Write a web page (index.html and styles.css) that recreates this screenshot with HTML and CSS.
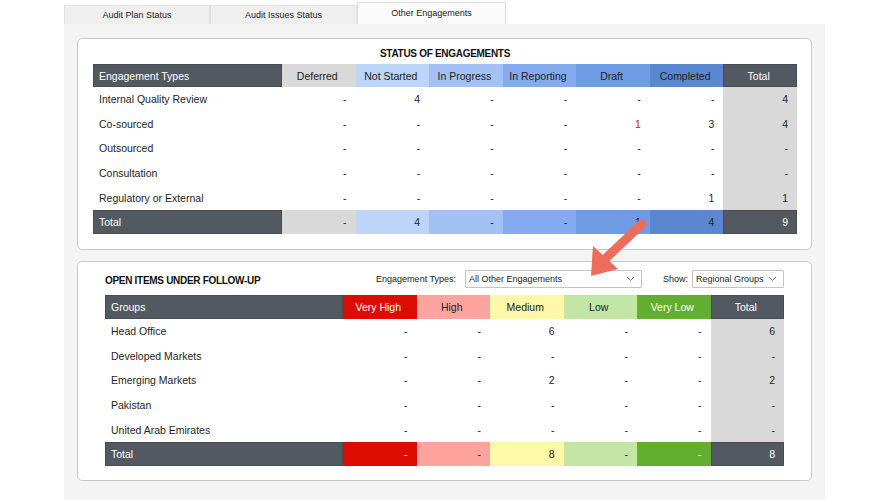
FILE: index.html
```html
<!DOCTYPE html>
<html>
<head>
<meta charset="utf-8">
<link rel="stylesheet" href="styles.css">
</head>
<body>
<div class="wrap">
  <div class="tabs">
    <div class="tab">Audit Plan Status</div>
    <div class="tab">Audit Issues Status</div>
    <div class="tab active">Other Engagements</div>
  </div>
  <div class="content">
    <div class="panel panel1">
      <div class="title center">STATUS OF ENGAGEMENTS</div>
      <table class="grid t1">
        <colgroup>
          <col class="c-name1"><col class="c-v"><col class="c-v"><col class="c-v"><col class="c-v"><col class="c-v"><col class="c-v"><col class="c-v">
        </colgroup>
        <tr class="head">
          <th class="dark left">Engagement Types</th>
          <th class="deferred">Deferred</th>
          <th class="ns">Not Started</th>
          <th class="ip">In Progress</th>
          <th class="ir">In Reporting</th>
          <th class="dr">Draft</th>
          <th class="co">Completed</th>
          <th class="dark">Total</th>
        </tr>
        <tr><td class="left">Internal Quality Review</td><td>-</td><td>4</td><td>-</td><td>-</td><td>-</td><td>-</td><td class="tot">4</td></tr>
        <tr><td class="left">Co-sourced</td><td>-</td><td>-</td><td>-</td><td>-</td><td class="red">1</td><td>3</td><td class="tot">4</td></tr>
        <tr><td class="left">Outsourced</td><td>-</td><td>-</td><td>-</td><td>-</td><td>-</td><td>-</td><td class="tot">-</td></tr>
        <tr><td class="left">Consultation</td><td>-</td><td>-</td><td>-</td><td>-</td><td>-</td><td>-</td><td class="tot">-</td></tr>
        <tr><td class="left">Regulatory or External</td><td>-</td><td>-</td><td>-</td><td>-</td><td>-</td><td>1</td><td class="tot">1</td></tr>
        <tr class="total">
          <td class="dark left">Total</td>
          <td class="deferred">-</td>
          <td class="ns">4</td>
          <td class="ip">-</td>
          <td class="ir">-</td>
          <td class="dr">1</td>
          <td class="co">4</td>
          <td class="dark">9</td>
        </tr>
      </table>
    </div>

    <div class="panel panel2">
      <div class="toolbar">
        <div class="title">OPEN ITEMS UNDER FOLLOW-UP</div>
        <span class="label">Engagement Types:</span>
        <div class="select sel1"><span>All Other Engagements</span>
          <svg class="chev" width="9" height="6" viewBox="0 0 9 6"><path d="M1 1 L4.5 4.5 L8 1" fill="none" stroke="#777" stroke-width="1"/></svg>
        </div>
        <span class="label show">Show:</span>
        <div class="select sel2"><span>Regional Groups</span>
          <svg class="chev" width="9" height="6" viewBox="0 0 9 6"><path d="M1 1 L4.5 4.5 L8 1" fill="none" stroke="#777" stroke-width="1"/></svg>
        </div>
      </div>
      <table class="grid t2">
        <colgroup>
          <col class="c-name2"><col class="c-v2"><col class="c-v2"><col class="c-v2"><col class="c-v2"><col class="c-v2"><col class="c-v2">
        </colgroup>
        <tr class="head">
          <th class="dark left">Groups</th>
          <th class="vh">Very High</th>
          <th class="hi">High</th>
          <th class="me">Medium</th>
          <th class="lo">Low</th>
          <th class="vl">Very Low</th>
          <th class="dark">Total</th>
        </tr>
        <tr><td class="left">Head Office</td><td>-</td><td>-</td><td>6</td><td>-</td><td>-</td><td class="tot">6</td></tr>
        <tr><td class="left">Developed Markets</td><td>-</td><td>-</td><td>-</td><td>-</td><td>-</td><td class="tot">-</td></tr>
        <tr><td class="left">Emerging Markets</td><td>-</td><td>-</td><td>2</td><td>-</td><td>-</td><td class="tot">2</td></tr>
        <tr><td class="left">Pakistan</td><td>-</td><td>-</td><td>-</td><td>-</td><td>-</td><td class="tot">-</td></tr>
        <tr><td class="left">United Arab Emirates</td><td>-</td><td>-</td><td>-</td><td>-</td><td>-</td><td class="tot">-</td></tr>
        <tr class="total">
          <td class="dark left">Total</td>
          <td class="vh">-</td>
          <td class="hi">-</td>
          <td class="me">8</td>
          <td class="lo">-</td>
          <td class="vl">-</td>
          <td class="dark">8</td>
        </tr>
      </table>
    </div>
  </div>
</div>

<svg class="arrow" width="70" height="66" viewBox="0 0 70 66">
  <line x1="62" y1="6" x2="26" y2="40" stroke="#ee6c5b" stroke-width="9" stroke-linecap="round"/>
  <polygon points="11,58 13,28 38,51" fill="#ee6c5b"/>
</svg>
</body>
</html>
```

FILE: styles.css
```css
* { box-sizing: border-box; }
html, body {
  margin: 0;
  padding: 0;
  background: #ffffff;
  font-family: "Liberation Sans", Arial, sans-serif;
  color: #1e1e1e;
}
.wrap {
  width: 761px;
  margin-left: 64px;
  padding-top: 2px;
}
.tabs {
  display: flex;
  align-items: flex-end;
  height: 22px;
}
.tab {
  height: 19px;
  width: 146px;
  background: #efefef;
  border: 1px solid #e2e2e2;
  border-bottom: none;
  font-size: 9px;
  line-height: 18px;
  text-align: center;
  color: #222;
}
.tab + .tab { border-left: 1px solid #dddddd; }
.tab:nth-child(2) { width: 147px; }
.tab.active {
  height: 22px;
  width: 149px;
  background: #fbfbfb;
  line-height: 21px;
  border: 1px solid #dcdcdc;
  border-bottom: none;
  border-radius: 2px 2px 0 0;
}
.content {
  background: #f4f4f4;
  padding: 14px 13px 20px 13px;
  height: 480px;
}
.panel {
  background: #ffffff;
  border: 1px solid #c8c8c8;
  border-radius: 5px;
}
.panel1 {
  padding: 0 14px 15px 15px;
}
.panel2 {
  margin-top: 11px;
  padding: 0 27px 14px 27px;
}
.title {
  font-weight: bold;
  font-size: 10px;
  letter-spacing: -0.3px;
  color: #111;
}
.title.center {
  text-align: center;
  height: 25px;
  padding-top: 9px;
  line-height: 12px;
}
.toolbar {
  display: flex;
  align-items: center;
  height: 33px;
  padding-top: 8px;
  padding-bottom: 7px;
}
.toolbar .title {
  flex: 1;
  padding-top: 4px;
}
.label {
  font-size: 9px;
  color: #222;
  margin-right: 9px;
}
.label.show {
  margin-left: 21px;
  margin-right: 4px;
}
.select {
  height: 18px;
  border: 1px solid #c4c4c4;
  background: #fff;
  font-size: 9px;
  display: flex;
  align-items: center;
  justify-content: space-between;
  padding: 0 6px 0 3px;
  border-radius: 1px;
}
.sel1 { width: 177px; }
.sel2 { width: 92px; }
.chev { display: block; }

.grid {
  border-collapse: collapse;
  table-layout: fixed;
  font-size: 10.5px;
}
.t1 { width: 704px; }
.t2 { width: 679px; }
.c-name1 { width: 189px; }
.c-name2 { width: 238px; }
.grid th, .grid td {
  padding: 0 9px 0 6px;
  white-space: nowrap;
  overflow: hidden;
}
.grid th {
  font-weight: normal;
  text-align: center;
  color: #222;
}
.grid td { text-align: right; }
.grid .left { text-align: left; }
.t1 .head { height: 23px; }
.t2 .head { height: 24px; }
.grid tr { height: 24.6px; }
.grid tr.total { height: 24px; }
.dark {
  background: #535960;
  color: #ffffff !important;
  box-shadow: inset 0 0 0 1px #474c52;
}
.tot { background: #d9d9d9; }
.red { color: #c4161c; }

.deferred { background: #d9d9d9; }
.ns { background: #bed5fa; }
.ip { background: #a3c1f4; }
.ir { background: #85abee; }
.dr { background: #6e9ce4; }
.co { background: #5a87d0; }

.vh { background: #dc0d00; color: #ffffff !important; }
.hi { background: #ffa39e; }
.me { background: #fff8a8; }
.lo { background: #c3e5a6; }
.vl { background: #62ae2f; color: #ffffff !important; }

.arrow {
  position: absolute;
  left: 580px;
  top: 218px;
}
```
